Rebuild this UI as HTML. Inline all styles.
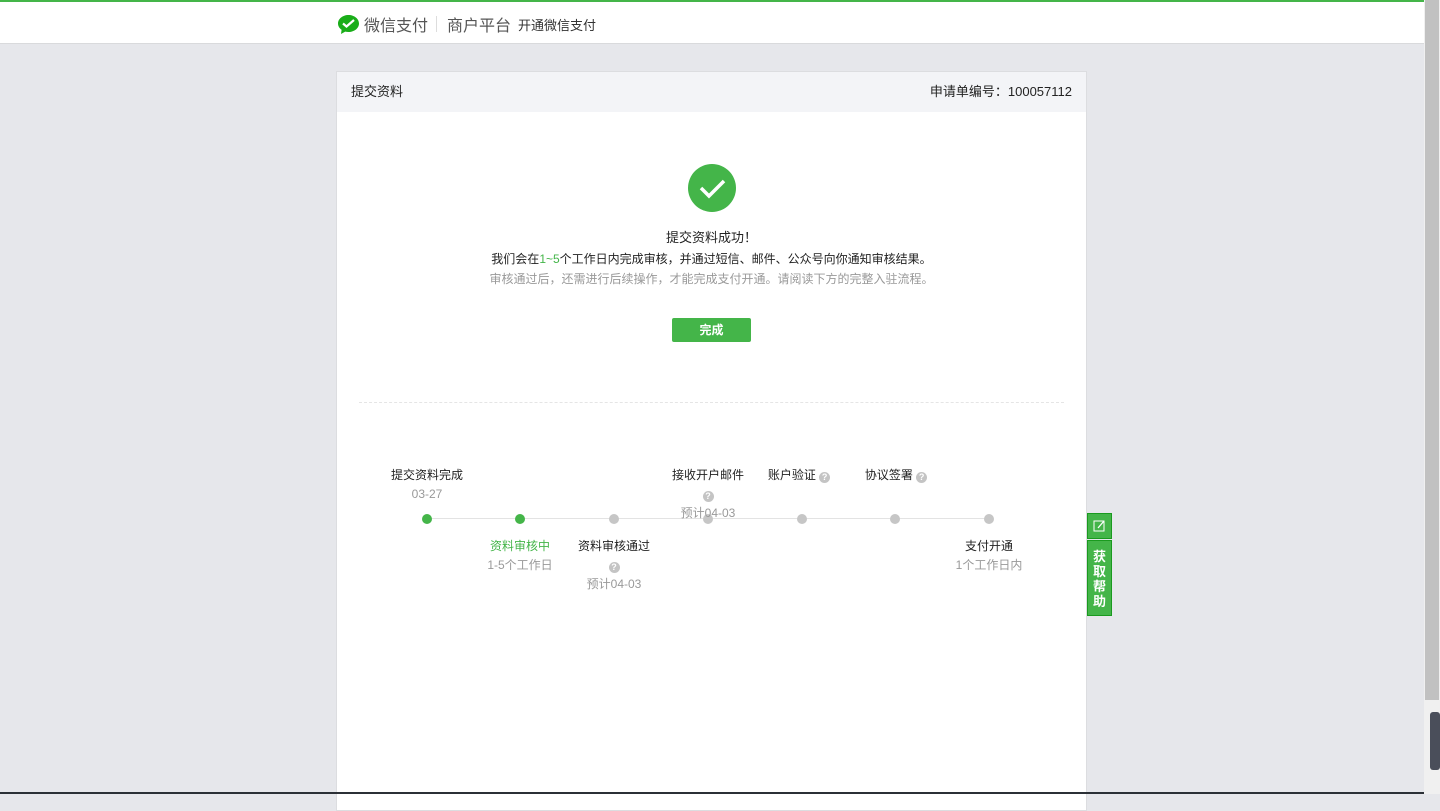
<!DOCTYPE html>
<html><head><meta charset="utf-8"><style>
*{margin:0;padding:0;box-sizing:border-box}
body{width:1440px;height:794px;overflow:hidden;background:#e6e7eb;font-family:"Liberation Sans","Noto Sans CJK SC",sans-serif;font-size:12px;color:#222;position:relative}
.top{position:absolute;left:0;top:0;width:1424px;height:44px;background:#fff;border-top:2px solid #44b549;border-bottom:1px solid #d9dadc}
.abs{position:absolute;white-space:nowrap}
.card{position:absolute;left:336px;top:71px;width:751px;height:740px;background:#fff;border:1px solid #dcdde0}
.hd{height:40px;background:#f3f4f7;line-height:40px;padding:0 14px;font-size:13px}
.c{text-align:center;position:absolute;left:0;width:749px}
.dot{position:absolute;width:10px;height:10px;border-radius:50%;background:#c6c6c6;top:442px}
.g{color:#999}
.q{display:inline-block;width:11px;height:11px;border-radius:50%;background:#c4c4c4;color:#fff;font-size:9px;line-height:11px;text-align:center;font-weight:bold;vertical-align:-1px}
.lab{position:absolute;text-align:center;width:120px;line-height:19px}
.sb{position:absolute;left:1424px;top:0;width:16px;height:794px;background:#f0f0f0}
</style></head><body>
<div class="top">
<svg class="abs" style="left:337px;top:12px" width="23" height="22" viewBox="0 0 23 22"><path d="M11.5 1C5.5 1 1 5 1 9.5c0 2.6 1.4 4.8 3.6 6.3L4 20l4.2-2.4c1 .3 2.1.4 3.3.4 6 0 10.5-4 10.5-8.5S17.5 1 11.5 1z" fill="#1aad19"/><path d="M6 9.5l3.5 3L17 6" stroke="#fff" stroke-width="2.2" fill="none"/></svg>
<div class="abs" style="left:364px;top:10px;font-size:16px;color:#555">微信支付</div>
<div class="abs" style="left:436px;top:14px;width:1px;height:16px;background:#ddd"></div>
<div class="abs" style="left:447px;top:10px;font-size:16px;color:#555">商户平台</div>
<div class="abs" style="left:518px;top:13px;font-size:13px;color:#333">开通微信支付</div>
</div>
<div class="card">
<div class="hd">提交资料<span style="float:right">申请单编号：100057112</span></div>
<div class="abs" style="left:351px;top:92px;width:48px;height:48px;border-radius:50%;background:#44b549"><svg width="48" height="48"><path d="M13 24l8 8 15-15" stroke="#fff" stroke-width="3.5" fill="none"/></svg></div>
<div class="c" style="top:155px;font-size:13px">提交资料成功！</div>
<div class="c" style="top:178px">我们会在<span style="color:#44b549">1~5</span>个工作日内完成审核，并通过短信、邮件、公众号向你通知审核结果。</div>
<div class="c g" style="top:198px">审核通过后，还需进行后续操作，才能完成支付开通。请阅读下方的完整入驻流程。</div>
<div class="abs" style="left:335px;top:246px;width:79px;height:24px;background:#44b549;border-radius:2px;color:#fff;text-align:center;line-height:24px;font-weight:bold">完成</div>
<div class="abs" style="left:22px;top:330px;width:705px;border-top:1px dashed #e5e5e5"></div>
<div class="abs" style="left:92px;top:446px;width:562px;height:1px;background:#e3e3e3"></div>
<div class="dot" style="left:85px;background:#44b549"></div>
<div class="dot" style="left:178px;background:#44b549"></div>
<div class="dot" style="left:272px"></div>
<div class="dot" style="left:366px"></div>
<div class="dot" style="left:460px"></div>
<div class="dot" style="left:553px"></div>
<div class="dot" style="left:647px"></div>
<div class="lab" style="left:30px;top:394px">提交资料完成<br><span class="g">03-27</span></div>
<div class="lab" style="left:311px;top:394px">接收开户邮件<br><span class="q">?</span><br><span class="g">预计04-03</span></div>
<div class="lab" style="left:402px;top:394px">账户验证 <span class="q">?</span></div>
<div class="lab" style="left:499px;top:394px">协议签署 <span class="q">?</span></div>
<div class="lab" style="left:123px;top:465px"><span style="color:#44b549">资料审核中</span><br><span class="g">1-5个工作日</span></div>
<div class="lab" style="left:217px;top:465px">资料审核通过<br><span class="q">?</span><br><span class="g">预计04-03</span></div>
<div class="lab" style="left:592px;top:465px">支付开通<br><span class="g">1个工作日内</span></div>
</div>
<div class="abs" style="left:1087px;top:513px;width:25px;height:26px;background:#44b549;border:1px solid #1a9a1f"><svg width="23" height="24"><rect x="6" y="7" width="10" height="10" fill="none" stroke="#fff" stroke-width="1"/><path d="M10 14l6-7" stroke="#fff" stroke-width="1.3"/></svg></div>
<div class="abs" style="left:1087px;top:540px;width:25px;height:76px;background:#44b549;border:1px solid #1a9a1f;color:#fff;font-size:13px;line-height:15px;text-align:center;padding-top:8px;white-space:normal;font-weight:bold">获<br>取<br>帮<br>助</div>
<div class="sb"><div style="position:absolute;left:1px;top:0;width:14px;height:700px;background:#c1c1c1"></div><div style="position:absolute;left:6px;top:712px;width:10px;height:58px;background:#4a4e5a;border-radius:3px"></div></div>
<div class="abs" style="left:0;top:792px;width:1424px;height:2px;background:#2b3036"></div>
</body></html>
